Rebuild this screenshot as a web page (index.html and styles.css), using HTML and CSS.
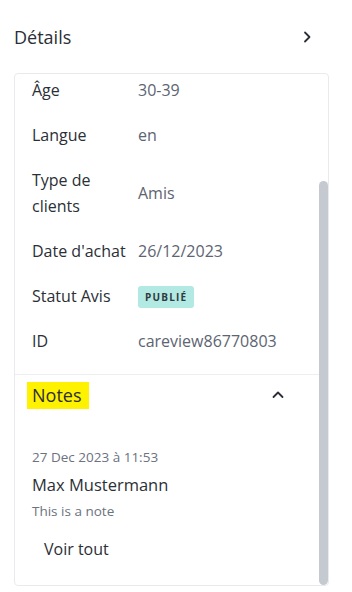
FILE: index.html
```html
<!DOCTYPE html>
<html lang="fr">
<head>
  <meta charset="UTF-8">
  <title>Détails</title>
  <meta name="viewport" content="width=device-width, initial-scale=1.0">
  <link rel="stylesheet" href="styles.css">
</head>
<body>

  <aside class="panel">
    <div class="panel-header">
      <h2>Détails</h2>
      <button class="icon-btn" title="Fermer">
        <svg width="16" height="16" viewBox="0 0 16 16"><path d="M6 3.5 10.5 8 6 12.5" fill="none" stroke="#2b2f36" stroke-width="1.8" stroke-linecap="round" stroke-linejoin="round"/></svg>
      </button>
    </div>

    <div class="card">
      <div class="card-scroll" id="cardScroll">
        <dl class="details">
          <div class="row"><dt>Nom</dt><dd>Max Mustermann</dd></div>
          <div class="row"><dt>Pays</dt><dd>DE</dd></div>
          <div class="row"><dt>Âge</dt><dd>30-39</dd></div>
          <div class="row"><dt>Langue</dt><dd>en</dd></div>
          <div class="row"><dt>Type de clients</dt><dd>Amis</dd></div>
          <div class="row"><dt>Date d'achat</dt><dd>26/12/2023</dd></div>
          <div class="row"><dt>Statut Avis</dt><dd><span class="badge">Publié</span></dd></div>
          <div class="row"><dt>ID</dt><dd>careview86770803</dd></div>
        </dl>

        <section class="notes">
          <div class="notes-header">
            <h3><span class="marker">Notes</span></h3>
            <button class="icon-btn" title="Réduire">
              <svg width="16" height="16" viewBox="0 0 16 16"><path d="M3.5 10 8 5.5 12.5 10" fill="none" stroke="#2b2f36" stroke-width="1.8" stroke-linecap="round" stroke-linejoin="round"/></svg>
            </button>
          </div>
          <div class="note">
            <div class="note-date">27 Dec 2023 à 11:53</div>
            <div class="note-author">Max Mustermann</div>
            <div class="note-text">This is a note</div>
          </div>
          <button class="link-btn">Voir tout</button>
        </section>
      </div>
      <div class="scroll-thumb" id="thumb"></div>
    </div>
  </aside>

  <script>
    // Carte défilée jusqu'en bas + barre de défilement
    const scroller = document.getElementById("cardScroll");
    const thumb = document.getElementById("thumb");

    function updateThumb() {
      const h = scroller.clientHeight;
      const total = scroller.scrollHeight;
      thumb.style.height = (h * h / total) + "px";
      thumb.style.top = (scroller.scrollTop / total * h) + "px";
    }

    scroller.addEventListener("scroll", updateThumb);
    scroller.scrollTop = scroller.scrollHeight;
    updateThumb();
  </script>

</body>
</html>
```

FILE: styles.css
```css
* {
  box-sizing: border-box;
}

body {
  margin: 0;
  background: #ffffff;
  font-family: 'Open Sans', sans-serif;
  color: #2b2f36;
}

.panel {
  padding: 25px 23px 0 14px;
}

.panel-header {
  display: flex;
  align-items: center;
  justify-content: space-between;
  height: 24px;
  margin-bottom: 24px;
}

.panel-header h2 {
  margin: 0;
  font-size: 18px;
  font-weight: 400;
}

.panel-header .icon-btn {
  margin-right: 10px;
}

.icon-btn {
  width: 24px;
  height: 24px;
  padding: 0;
  border: none;
  background: transparent;
  display: flex;
  align-items: center;
  justify-content: center;
  cursor: pointer;
}

.card {
  position: relative;
  height: 513px;
  border: 1px solid #e8eaed;
  border-radius: 4px;
  overflow: hidden;
}

.card-scroll {
  height: 100%;
  overflow-y: auto;
  scrollbar-width: none;
}

.card-scroll::-webkit-scrollbar {
  display: none;
}

.scroll-thumb {
  position: absolute;
  right: 0;
  width: 9px;
  background: #c5cad1;
  border-radius: 5px;
}

.details {
  margin: 0;
  padding: 38px 9px 11px 17px;
}

.row {
  display: grid;
  grid-template-columns: 100px 1fr;
  column-gap: 6px;
  align-items: center;
  padding: 9.5px 0;
  font-size: 16px;
  line-height: 26px;
}

.row dt {
  color: #2b2f36;
}

.row dd {
  margin: 0;
  color: #5d6472;
}

.badge {
  display: inline-block;
  padding: 0 7px;
  line-height: 22px;
  border-radius: 3px;
  background: #b3e9e3;
  color: #2f3a40;
  font-size: 10px;
  font-weight: 700;
  letter-spacing: 1.2px;
  text-transform: uppercase;
  vertical-align: middle;
}

.notes {
  border-top: 1px solid #eceef0;
  margin-right: 9px;
  padding: 0 0 18px 17px;
}

.notes-header {
  display: flex;
  align-items: center;
  justify-content: space-between;
  height: 40px;
  padding-right: 29px;
}

.notes-header h3 {
  margin: 0;
  font-size: 18px;
  font-weight: 400;
}

.marker {
  background: #fff200;
  padding: 1px 8px 2px 5px;
  margin-left: -5px;
}

.note {
  padding-top: 33px;
}

.note-date {
  font-size: 13.5px;
  line-height: 18px;
  color: #6b7280;
}

.note-author {
  margin-top: 8px;
  font-size: 16.5px;
  line-height: 22px;
}

.note-text {
  margin-top: 6px;
  font-size: 13.5px;
  line-height: 18px;
  color: #6b7280;
}

.link-btn {
  margin-top: 11px;
  height: 36px;
  padding: 0 12px;
  border: none;
  background: transparent;
  font-family: inherit;
  font-size: 16px;
  font-weight: 500;
  color: #2b2f36;
  cursor: pointer;
}
```
